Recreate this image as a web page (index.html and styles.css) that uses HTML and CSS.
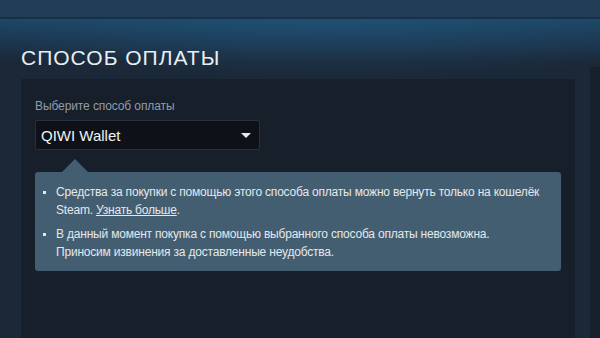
FILE: index.html
```html
<!DOCTYPE html>
<html lang="ru">
<head>
  <meta charset="UTF-8">
  <title>Способ оплаты</title>
  <link rel="stylesheet" href="styles.css">
</head>
<body>
  <div class="topbar"></div>

  <div class="page">
    <div class="main">
      <h1 class="title">Способ оплаты</h1>

      <div class="panel">
        <div class="field-label">Выберите способ оплаты</div>
        <div class="dropdown">
          <span class="dropdown-value">QIWI Wallet</span>
          <span class="dropdown-arrow"></span>
        </div>

        <div class="notice">
          <ul class="notice-list">
            <li><span>Средства за покупки с помощью этого способа оплаты можно вернуть только на кошелёк Steam. <a href="#">Узнать больше</a>.</span></li>
            <li><span>В данный момент покупка с помощью выбранного способа оплаты невозможна. Приносим извинения за доставленные неудобства.</span></li>
          </ul>
        </div>
      </div>
    </div>

    <aside class="side"></aside>
  </div>
</body>
</html>
```

FILE: styles.css
```css
html, body { height: 100%; }
body {
  margin: 0;
  background: #1b2838;
  font-family: "Liberation Sans", Arial, sans-serif;
  overflow: hidden;
}

.topbar {
  height: 17px;
  background: #213d56;
  border-bottom: 2px solid #19304a;
}

.page {
  display: flex;
  gap: 15px;
  padding-left: 21px;
  height: calc(100% - 19px);
  background:
    radial-gradient(ellipse 70% 60px at 55% 0, rgba(33, 90, 130, 0.55), rgba(27, 40, 56, 0) 100%),
    linear-gradient(to bottom, #1c4562 0, #1c3650 18px, #1b2838 42px);
}

.main {
  width: 554px;
  display: flex;
  flex-direction: column;
}

.title {
  margin: 27px 0 9px;
  font-size: 21px;
  line-height: 24px;
  font-weight: normal;
  letter-spacing: 1px;
  text-transform: uppercase;
  color: #e9eef2;
}

.panel {
  flex: 1;
  background: #171f2b;
  padding: 19px 14px 0;
}

.field-label {
  font-size: 12px;
  line-height: 16px;
  letter-spacing: -0.1px;
  color: #939ca5;
}

.dropdown {
  margin-top: 6px;
  width: 225px;
  height: 30px;
  box-sizing: border-box;
  display: flex;
  align-items: center;
  justify-content: space-between;
  padding: 0 8px 0 5px;
  background: #0e1218;
  border: 1px solid #26323f;
  border-radius: 2px;
}

.dropdown-value {
  font-size: 15px;
  color: #eef2f5;
}

.dropdown-arrow {
  width: 0;
  height: 0;
  border-left: 5px solid transparent;
  border-right: 5px solid transparent;
  border-top: 5px solid #e6eaee;
}

.notice {
  position: relative;
  margin-top: 22px;
  background: #435e70;
  border-radius: 3px;
  padding: 11px 14px 10px 8px;
}

.notice::before {
  content: "";
  position: absolute;
  top: -13px;
  left: 27px;
  border-left: 13px solid transparent;
  border-right: 13px solid transparent;
  border-bottom: 13px solid #435e70;
}

.notice-list {
  margin: 0;
  padding: 0;
  list-style: none;
}

.notice-list li {
  display: flex;
  font-size: 12px;
  line-height: 18px;
  letter-spacing: -0.2px;
  color: #e3e8ec;
}
.notice-list li + li { margin-top: 6px; }

.notice-list li::before {
  content: "";
  flex: none;
  width: 3px;
  height: 3px;
  margin: 8px 10px 0 0;
  background: #e3e8ec;
}

.notice-list a { color: #e3e8ec; }

.side {
  flex: 1;
  margin-top: 48px;
  background: #17202d;
}
```
